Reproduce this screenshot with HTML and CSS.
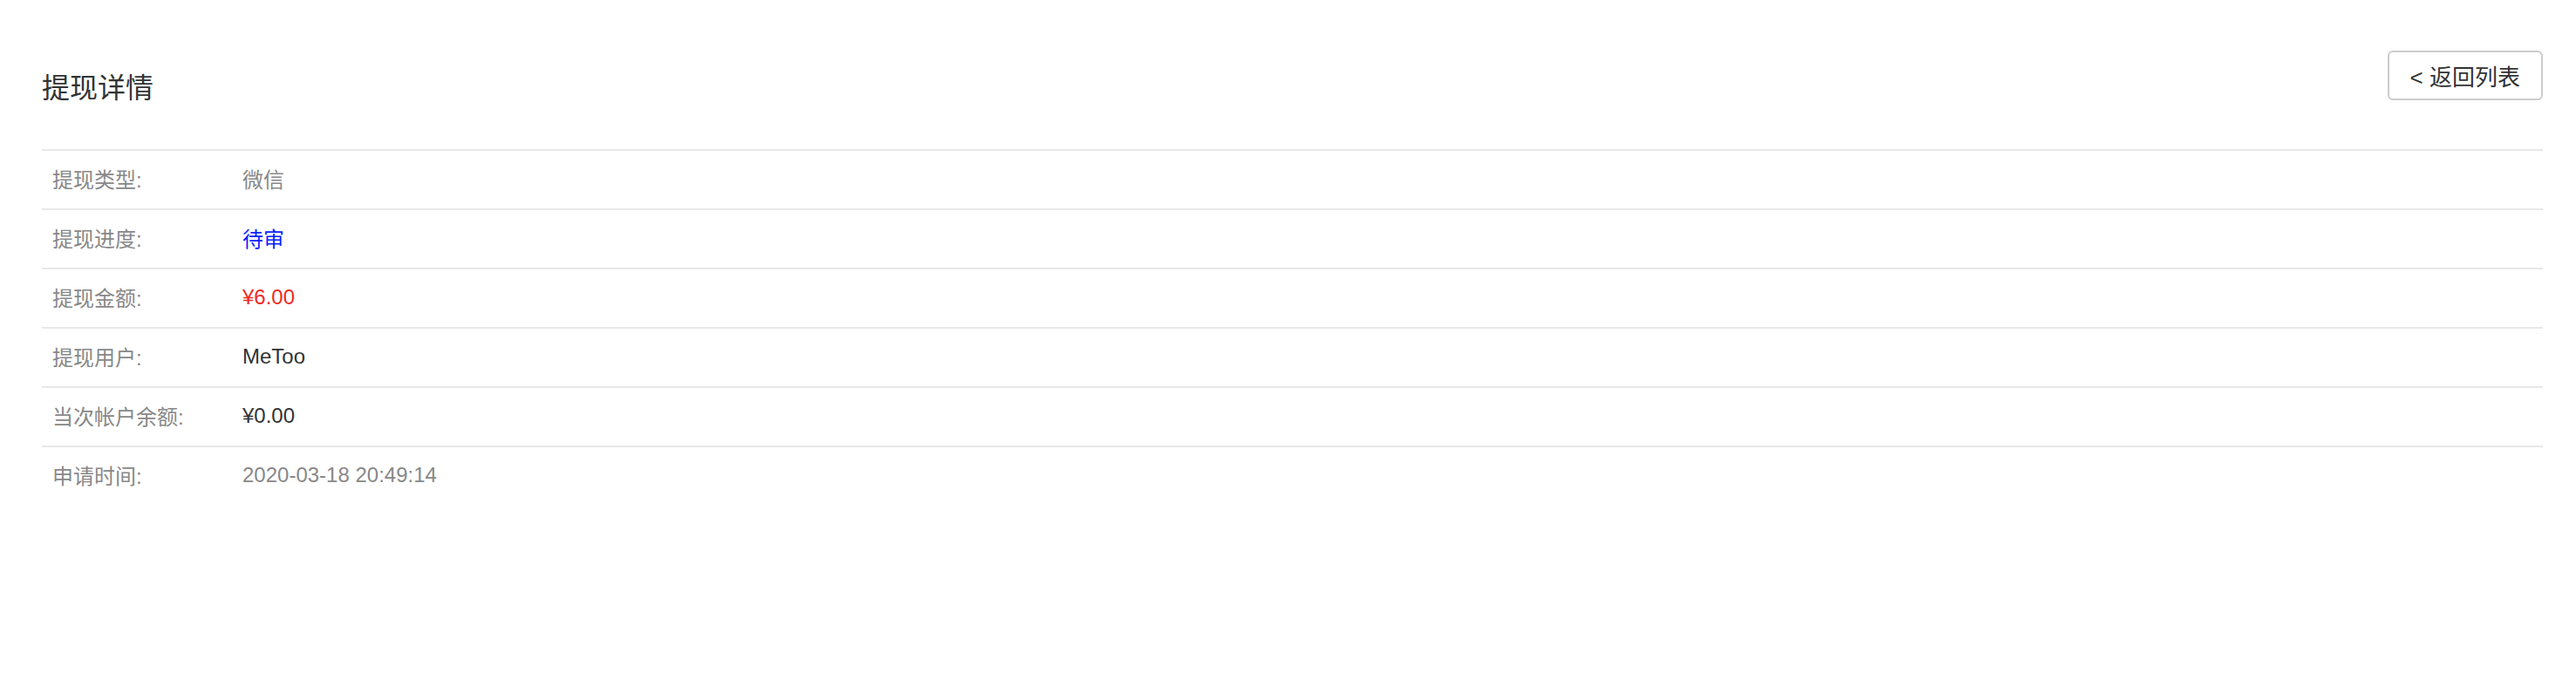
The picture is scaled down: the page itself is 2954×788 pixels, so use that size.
FILE: index.html
```html
<!DOCTYPE html>
<html lang="zh-CN">
<head>
<meta charset="UTF-8">
<meta name="viewport" content="width=device-width, initial-scale=1.0">
<title>提现详情</title>
<link rel="stylesheet" href="styles.css">
</head>
<body>
    <div class="page">
        <div class="header">
            <h1 class="title">提现详情</h1>
            <button class="back-btn" type="button">&lt; 返回列表</button>
        </div>

        <table class="detail">
            <tr>
                <th>提现类型:</th>
                <td class="muted">微信</td>
            </tr>
            <tr>
                <th>提现进度:</th>
                <td class="status">待审</td>
            </tr>
            <tr>
                <th>提现金额:</th>
                <td class="amount">¥6.00</td>
            </tr>
            <tr>
                <th>提现用户:</th>
                <td>MeToo</td>
            </tr>
            <tr>
                <th>当次帐户余额:</th>
                <td>¥0.00</td>
            </tr>
            <tr>
                <th>申请时间:</th>
                <td class="muted">2020-03-18 20:49:14</td>
            </tr>
        </table>
    </div>
</body>
</html>
```

FILE: styles.css
```css
body {
    margin: 0;
    background-color: #fff;
    font-family: "Liberation Sans", "Noto Sans CJK SC", sans-serif;
    color: #333;
}
.page {
    padding: 58px 38px 0 48px;
}
.header {
    display: flex;
    justify-content: space-between;
    align-items: flex-start;
}
.title {
    margin: 23px 0 50px 0;
    font-size: 32px;
    line-height: 40px;
    font-weight: normal;
    color: #333;
}
.back-btn {
    height: 57px;
    padding: 0 24px;
    background-color: #fff;
    border: 2px solid #ccc;
    border-radius: 6px;
    font-family: inherit;
    font-size: 26px;
    color: #333;
    cursor: pointer;
}
.detail {
    width: 100%;
    border-collapse: collapse;
    font-size: 24px;
}
.detail tr {
    border-top: 2px solid #e8e8e8;
}
.detail th,
.detail td {
    height: 63px;
    padding: 0 12px 3px 12px;
    text-align: left;
    font-weight: normal;
    vertical-align: middle;
}
.detail th {
    width: 194px;
    color: #888;
}
.detail td {
    color: #333;
}
.detail td.muted {
    color: #888;
}
.detail td.status {
    color: #0a1eff;
}
.detail td.amount {
    color: #f02a1e;
}
```
